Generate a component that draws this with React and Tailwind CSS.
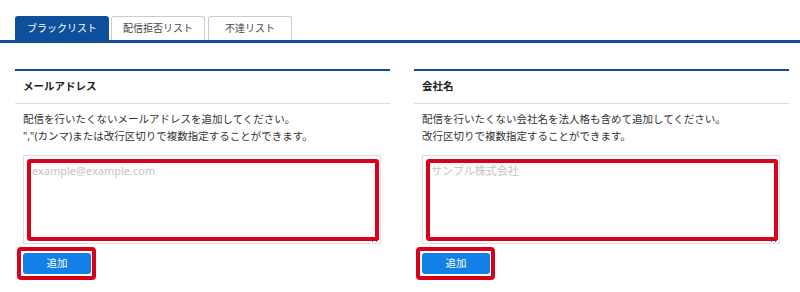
import React from "react";

const font = { fontFamily: '"Noto Sans", "Noto Sans CJK JP", sans-serif' };

function Panel({ title, lines, placeholder }) {
  return (
    <div className="w-[375px] border-t-2 border-[#0d4f9a]">
      <div className="h-[33px] flex items-center px-[8px] border-b border-[#dddddd] text-[10.5px] font-bold text-[#222]">
        {title}
      </div>
      <div className="px-[8px] pt-[7px] text-[10.5px] leading-[17px] text-[#333]">
        {lines.map((l, i) => (
          <div key={i}>{l}</div>
        ))}
      </div>
      <div className="relative ml-[8px] mt-[10px] w-[358px] h-[89px]">
        <textarea
          className="block w-full h-full border border-[#dddddd] px-[8px] py-[7px] text-[11px] leading-[15px] text-[#333] placeholder:text-[#c4c4c4] outline-none"
          style={font}
          placeholder={placeholder}
        />
        <div className="absolute left-[4px] top-[4px] right-[2px] bottom-[3px] border-[4px] border-[#d9001b] rounded-[3px] pointer-events-none" />
      </div>
      <div className="relative ml-[8px] mt-[9px] w-[68px] h-[21px]">
        <button className="w-full h-full rounded-[3px] bg-[#1380e8] text-white text-[10.5px] flex items-center justify-center">
          追加
        </button>
        <div className="absolute -left-[6px] -top-[6px] -right-[5px] -bottom-[6px] border-[4px] border-[#d9001b] rounded-[4px] pointer-events-none" />
      </div>
    </div>
  );
}

export default function App() {
  return (
    <div className="w-[800px] h-[292px] bg-white overflow-hidden" style={font}>
      <div className="pt-[16px] pl-[15px] flex items-end gap-[2px]">
        <div className="w-[94px] h-[24px] rounded-t-[3px] bg-[#0d4f9a] text-white text-[10px] flex items-center justify-center">
          ブラックリスト
        </div>
        <div className="w-[94px] h-[24px] rounded-t-[3px] border border-b-0 border-[#cccccc] bg-white text-[#444] text-[10px] flex items-center justify-center">
          配信拒否リスト
        </div>
        <div className="ml-[1px] w-[84px] h-[24px] rounded-t-[3px] border border-b-0 border-[#cccccc] bg-white text-[#444] text-[10px] flex items-center justify-center">
          不達リスト
        </div>
      </div>
      <div className="h-[3px] bg-[#0d4f9a]" />
      <div className="mt-[26px] pl-[15px] flex gap-[24px]">
        <Panel
          title="メールアドレス"
          lines={[
            "配信を行いたくないメールアドレスを追加してください。",
            '","(カンマ)または改行区切りで複数指定することができます。',
          ]}
          placeholder="example@example.com"
        />
        <Panel
          title="会社名"
          lines={[
            "配信を行いたくない会社名を法人格も含めて追加してください。",
            "改行区切りで複数指定することができます。",
          ]}
          placeholder="サンプル株式会社"
        />
      </div>
    </div>
  );
}
